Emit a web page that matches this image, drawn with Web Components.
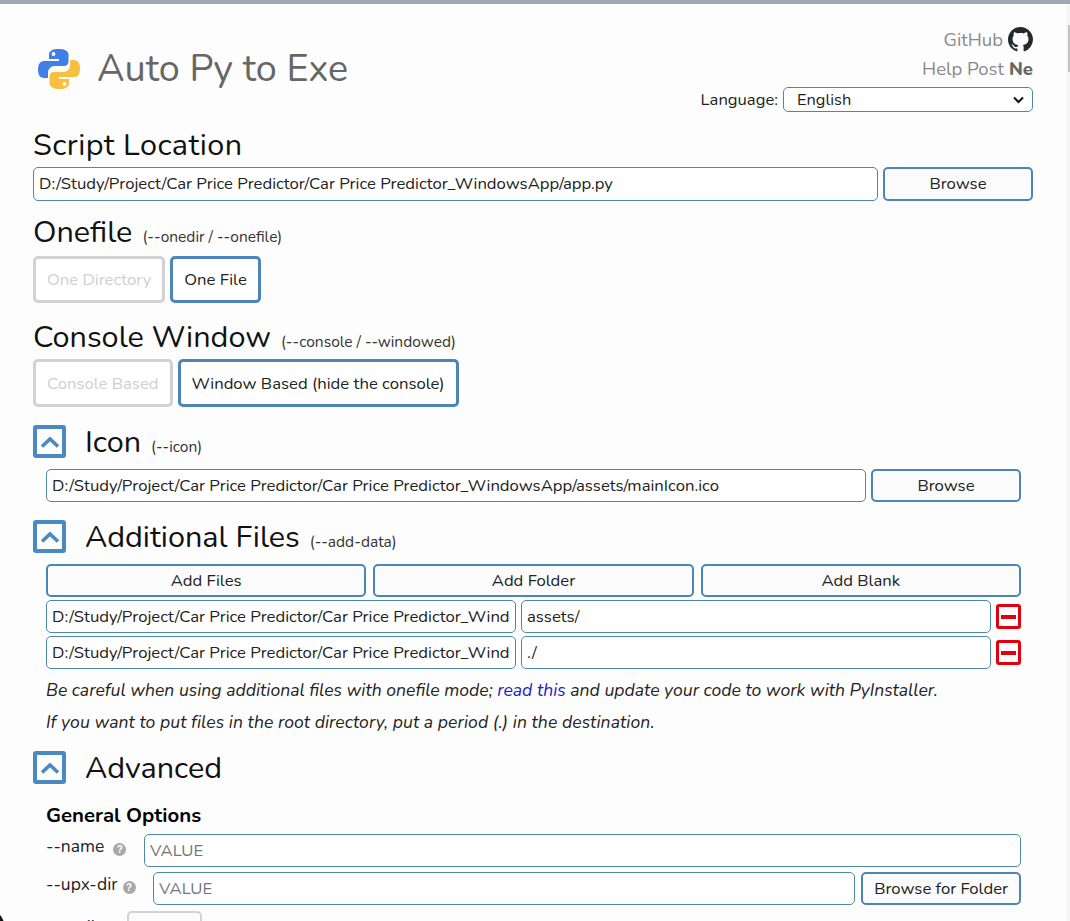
<!DOCTYPE html>
<html><head><meta charset="utf-8"><style>
html,body{margin:0;height:921px;overflow:hidden;background:#fdfdfd}
body{font-family:Nunito,Lato,"Noto Sans",sans-serif;color:#000}
.row{display:flex;gap:5px}
.in{margin-left:13px;margin-right:12px}
.note{margin:10px 0 0 13px;font-size:17.6px;font-style:italic;line-height:22px;color:#222}
.opt{display:flex;align-items:flex-start;margin-left:13px;margin-right:12px;font-size:17.5px;line-height:24px;color:#222}
.opt>span{flex:none;white-space:nowrap}
</style></head><body>
<template id="app-tpl"><style>
:host{display:block;position:relative;height:917px;border-top:4px solid #a0a7b5;overflow:hidden}
.wrap{display:flex;height:917px}
main{flex:1;padding:0 33px;overflow:hidden;min-width:0;background:#fdfdfd}
.sb{width:4px;background:#f6f6f6;padding-top:21px;box-sizing:border-box;display:flex;justify-content:flex-end;align-items:flex-start}
.sb i{display:block;width:2px;height:47px;background:#c2c2c2}
.cur{position:absolute;left:0;bottom:0}
</style><div class="wrap"><main><slot></slot></main><div class="sb"><i></i></div></div><svg class="cur" width="4" height="6" viewBox="0 0 4 6"><path d="M0 0C1.500 1.500 2.500 3.500 3.500 6H0Z" fill="#111"/></svg></template>

<template id="hdr-tpl"><style>
:host{display:flex;justify-content:space-between;height:123px;box-sizing:border-box}
.l{display:flex;align-items:center;gap:16px;padding-left:4px;height:129px;box-sizing:border-box}
h1{margin:0;font-weight:400;font-size:37.800px;color:#666;line-height:1}
.r{display:flex;flex-direction:column;align-items:flex-end;padding-top:21px}
.ln{display:flex;align-items:center;gap:5px;height:29px;font-size:18.500px;color:#8a8a8a}
.ne{font-weight:800;color:#666}
.lang{display:flex;align-items:center;gap:5px;height:25px;margin-top:4px;font-size:16.600px;color:#222}
.sel{width:250px;height:25px;box-sizing:border-box;border:1px solid #4d87ac;border-radius:5px;background:#fff;display:flex;align-items:center;justify-content:space-between;padding:0 8px 0 13px;font-size:16.400px}
</style>
<div class="l"><svg width="44" height="42" viewBox="0 0 44 42"><path d="M21.500 1C15 1 12 3 12 6.500V11h10v2H7C3 13 1 16.500 1 21.500S3 30 7 30h4v-5.500c0-3.500 3-6.500 6.500-6.500H27c2.800 0 4.500-1.800 4.500-4.500V6.500C31.500 3 27.500 1 21.500 1Z" fill="#3f7fe6"/><circle cx="16.500" cy="6" r="1.900" fill="#fff"/><path d="M22.500 41c6.500 0 9.500-2 9.500-5.500V31H22v-2h15c4 0 6-3.500 6-8.500S41 12 37 12h-4v5.500c0 3.500-3 6.500-6.500 6.500H17c-2.800 0-4.500 1.800-4.500 4.500v7C12.500 39 16.500 41 22.500 41Z" fill="#fbbf3f"/><circle cx="27.500" cy="36" r="1.900" fill="#fff"/></svg><h1>Auto Py to Exe</h1></div>
<div class="r"><div class="ln">GitHub <svg width="25" height="25" viewBox="0 0 16 16"><path fill="#24292e" d="M8 0C3.580 0 0 3.580 0 8c0 3.540 2.290 6.530 5.470 7.590.4.070.55-.17.55-.38 0-.19-.01-.82-.01-1.490-2.010.37-2.530-.49-2.690-.94-.09-.23-.48-.94-.82-1.130-.28-.15-.68-.52-.01-.53.63-.01 1.080.58 1.230.82.72 1.210 1.870.87 2.330.66.070-.52.280-.87.510-1.070-1.780-.2-3.640-.89-3.640-3.950 0-.87.310-1.590.820-2.150-.08-.2-.36-1.020.08-2.120 0 0 .67-.21 2.200.82.64-.18 1.320-.27 2-.27s1.360.09 2 .27c1.530-1.040 2.200-.82 2.200-.82.44 1.100.16 1.920.08 2.120.51.56.82 1.270.82 2.150 0 3.070-1.870 3.750-3.650 3.950.29.25.54.73.54 1.480 0 1.070-.01 1.930-.01 2.200 0 .21.15.46.55.38A8.010 8.010 0 0 0 16 8c0-4.420-3.580-8-8-8Z"/></svg></div>
<div class="ln">Help Post <span class="ne">Ne</span></div>
<div class="lang">Language: <div class="sel">English <svg width="11" height="8" viewBox="0 0 11 8"><path d="M1 1.500 5.500 6 10 1.500" fill="none" stroke="#111" stroke-width="2"/></svg></div></div></div>
</template>

<template id="ttl-tpl"><style>
:host{display:flex;align-items:baseline;font-size:30.600px;line-height:36px;height:36px;gap:10px;color:#111}
.s{font-size:15.500px;color:#333;line-height:1}
</style><slot></slot><span class="s"><slot name="s"></slot></span></template>

<template id="fld-tpl"><style>
:host{display:block;min-width:0;height:33px;box-sizing:border-box;border:1px solid #4d87ac;border-radius:5px;background:#fff;font-size:16.700px;line-height:31px;padding:0 5px;white-space:nowrap;overflow:hidden;color:#222}
:host([ph]){color:#757575}
</style><slot></slot></template>

<template id="btn-tpl"><style>
:host{display:flex;align-items:center;justify-content:center;box-sizing:border-box;height:33px;border:2px solid #4a86b7;border-radius:5px;background:#fbfbfb;font-size:16.700px;color:#222;white-space:nowrap}
:host([t]){border-width:3px;height:47px;background:#fff;padding:0 11px}
:host([pad]){padding:0 11px}
:host([off]){border-color:#d2d2d2;color:#cfcfcf}
</style><slot></slot></template>

<template id="tog-tpl"><style>
:host{display:flex;width:33px;height:33px;box-sizing:border-box;border:4px solid #4a8ac3;border-radius:3px;align-items:center;justify-content:center;flex:none;background:#fdfdfd}
</style><svg width="22" height="14" viewBox="0 0 22 14"><path d="M3 11.500 11 4 19 11.500" fill="none" stroke="#4a8ac3" stroke-width="3.600"/></svg></template>

<template id="rem-tpl"><style>
:host{display:flex;width:25px;height:25px;box-sizing:border-box;border:3px solid #e0000f;border-radius:3px;align-items:center;justify-content:center;flex:none}
i{display:block;width:15px;height:4px;background:#e0000f}
</style><i></i></template>

<template id="sec-tpl"><style>
:host{display:flex;align-items:center;gap:19px;height:33px;font-size:30.600px;color:#111}
.s{font-size:15.500px;color:#333;line-height:1}
.t{display:flex;align-items:baseline;gap:10px}
</style><apy-toggle></apy-toggle><div class="t"><slot></slot><span class="s"><slot name="s"></slot></span></div></template>

<template id="hlp-tpl"><style>
:host{display:inline-block;width:13px;height:13px;border-radius:50%;background:#a8a8a8;color:#fff;font:700 10px/13px "Liberation Sans",sans-serif;text-align:center;vertical-align:-1px}
</style>?</template>

<apy-app>
<apy-header></apy-header>
<apy-title style="letter-spacing:.4px">Script Location</apy-title>
<div class="row" style="margin-top:4px"><apy-field style="flex:1;height:34px;line-height:32px">D:/Study/Project/Car Price Predictor/Car Price Predictor_WindowsApp/app.py</apy-field><apy-btn style="width:150px;height:34px;padding-bottom:2px">Browse</apy-btn></div>
<apy-title style="margin-top:13px">Onefile<span slot="s">(--onedir / --onefile)</span></apy-title>
<div class="row" style="margin-top:6px"><apy-btn t off>One Directory</apy-btn><apy-btn t>One File</apy-btn></div>
<apy-title style="margin-top:16px">Console Window<span slot="s">(--console / --windowed)</span></apy-title>
<div class="row" style="margin-top:4px"><apy-btn t off style="height:48px">Console Based</apy-btn><apy-btn t style="height:48px">Window Based (hide the console)</apy-btn></div>
<apy-section style="margin-top:18px">Icon<span slot="s">(--icon)</span></apy-section>
<div class="row in" style="margin-top:11px"><apy-field style="flex:1">D:/Study/Project/Car Price Predictor/Car Price Predictor_WindowsApp/assets/mainIcon.ico</apy-field><apy-btn style="width:150px">Browse</apy-btn></div>
<apy-section style="margin-top:18px">Additional Files<span slot="s">(--add-data)</span></apy-section>
<div class="row in" style="gap:7px;margin-top:11px"><apy-btn style="flex:1">Add Files</apy-btn><apy-btn style="flex:1">Add Folder</apy-btn><apy-btn style="flex:1">Add Blank</apy-btn></div>
<div class="row in" style="margin-top:3px;align-items:center"><apy-field style="width:470px;flex:none">D:/Study/Project/Car Price Predictor/Car Price Predictor_Wind</apy-field><apy-field style="flex:1">assets/</apy-field><apy-rem></apy-rem></div>
<div class="row in" style="margin-top:3px;align-items:center"><apy-field style="width:470px;flex:none">D:/Study/Project/Car Price Predictor/Car Price Predictor_Wind</apy-field><apy-field style="flex:1">./</apy-field><apy-rem></apy-rem></div>
<p class="note">Be careful when using additional files with onefile mode; <a style="color:#2020c0;text-decoration:none">read this</a> and update your code to work with PyInstaller.</p>
<p class="note" style="letter-spacing:.06px">If you want to put files in the root directory, put a period (.) in the destination.</p>
<apy-section style="margin-top:18px">Advanced</apy-section>
<div style="margin:18px 0 0 13px;font-size:20.400px;font-weight:700;line-height:26px">General Options</div>
<div class="opt" style="margin-top:6px"><span style="width:98px">--name<apy-help style="margin-left:9px"></apy-help></span><apy-field ph style="flex:1">VALUE</apy-field></div>
<div class="opt" style="margin-top:5px"><span style="width:107px">--upx-dir<apy-help style="margin-left:5px"></apy-help></span><apy-field ph style="flex:1">VALUE</apy-field><apy-btn pad style="margin-left:6px">Browse for Folder</apy-btn></div>
<div class="opt" style="margin-top:6px"><span style="width:81px;padding-top:4px">--ascii<apy-help style="margin-left:6px"></apy-help></span><apy-btn off style="width:75px">Enable</apy-btn></div>
</apy-app>
<script>
const mk=(tag,id)=>customElements.define(tag,class extends HTMLElement{constructor(){super();this.attachShadow({mode:'open'}).appendChild(document.getElementById(id).content.cloneNode(true));}});
[['apy-app','app-tpl'],['apy-header','hdr-tpl'],['apy-title','ttl-tpl'],['apy-field','fld-tpl'],['apy-btn','btn-tpl'],['apy-toggle','tog-tpl'],['apy-rem','rem-tpl'],['apy-section','sec-tpl'],['apy-help','hlp-tpl']].forEach(a=>mk(a[0],a[1]));
</script>
</body></html>
